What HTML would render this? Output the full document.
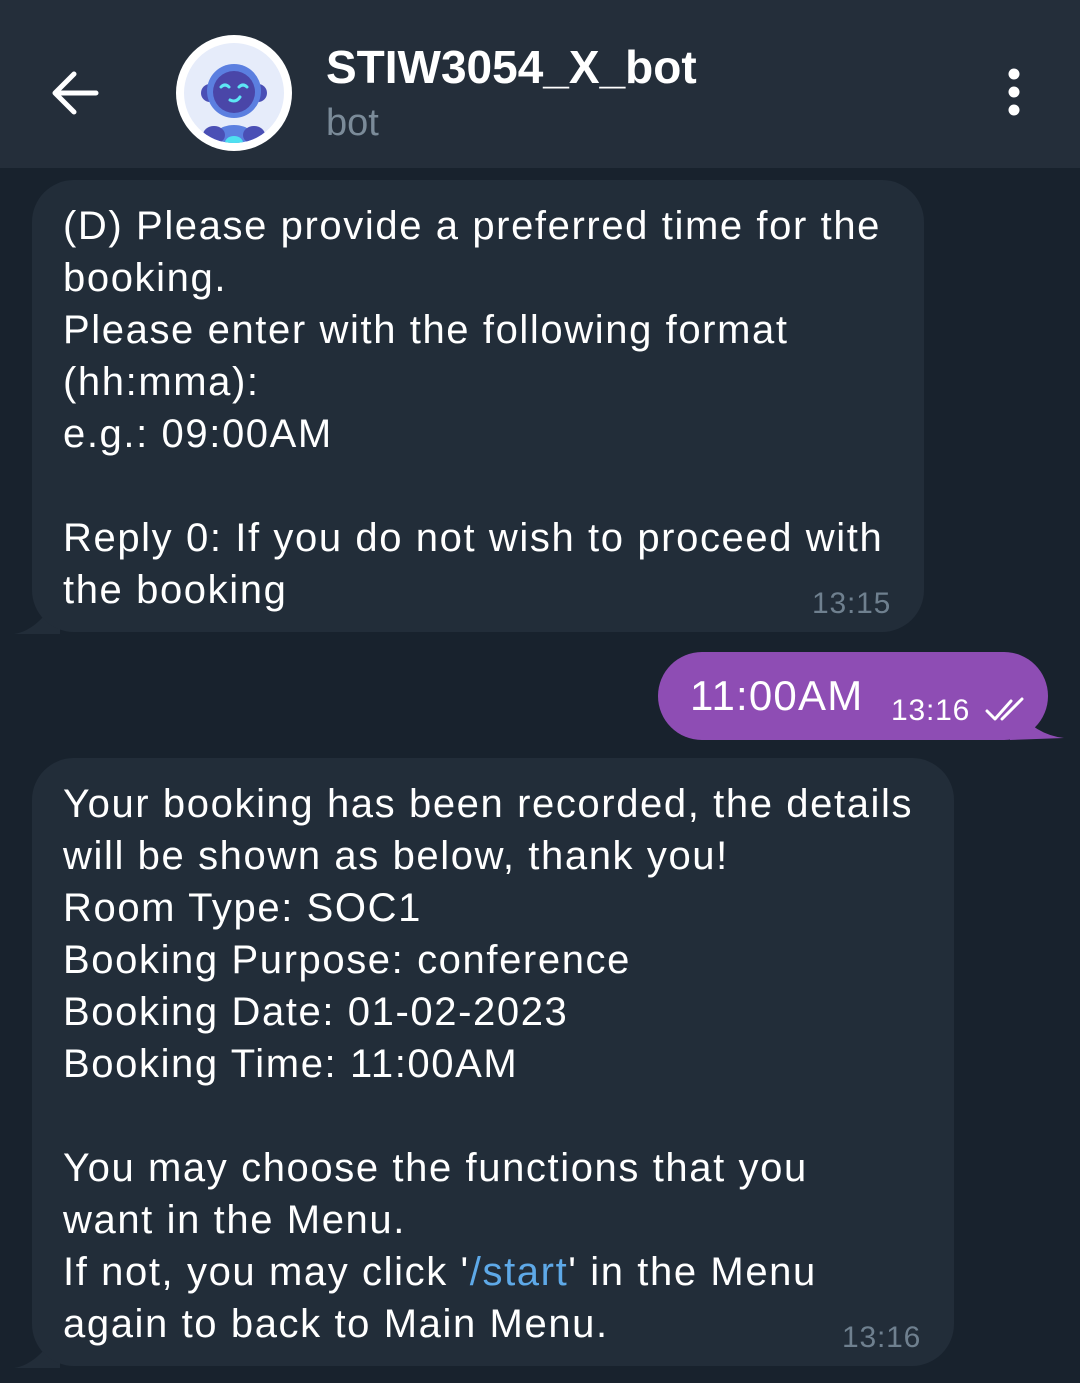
<!DOCTYPE html>
<html><head><meta charset="utf-8"><style>
*{margin:0;padding:0;box-sizing:border-box}
body{width:1080px;height:1383px;background:#18222d;font-family:"Liberation Sans",sans-serif;position:relative;overflow:hidden;color:#fff}
.hdr{position:absolute;left:0;top:0;width:1080px;height:168px;background:#242e3a}
.b{position:absolute;background:#222d39;border-radius:42px;font-size:40px;line-height:52px;padding:20px 0 0 31px;letter-spacing:1.6px;white-space:nowrap}
.t{position:absolute;font-size:30px;color:#6f808f;letter-spacing:0.8px}
a{color:#5ea9e8;text-decoration:none}
</style></head><body>
<div class="hdr">
<svg style="position:absolute;left:50px;top:70px" width="50" height="46" viewBox="0 0 50 46"><path d="M46 23H6M24 4L5 23l19 19" stroke="#fff" stroke-width="5" fill="none" stroke-linecap="round" stroke-linejoin="round"/></svg>
<svg style="position:absolute;left:176px;top:35px" width="116" height="116" viewBox="0 0 116 116">
<defs><clipPath id="c"><circle cx="58" cy="58" r="50"/></clipPath></defs>
<circle cx="58" cy="58" r="58" fill="#fff"/><circle cx="58" cy="58" r="50" fill="#e6ecfa"/>
<g clip-path="url(#c)">
<ellipse cx="58" cy="112" rx="26" ry="22" fill="#5b7fe0"/><ellipse cx="38" cy="100" rx="11" ry="9" fill="#4a4fb5"/><ellipse cx="78" cy="100" rx="11" ry="9" fill="#4a4fb5"/>
<ellipse cx="58" cy="108" rx="9" ry="7" fill="#4ee0f0"/></g>
<circle cx="34" cy="58" r="9" fill="#4a4fb5"/><circle cx="82" cy="58" r="9" fill="#4a4fb5"/>
<circle cx="58" cy="56" r="27" fill="#5b7fe0"/><circle cx="58" cy="57" r="21" fill="#4a46a8"/>
<path d="M45 52q4-4 8 0M63 52q4-4 8 0M54 65q6 3 10-3" stroke="#5de6f5" stroke-width="3" fill="none" stroke-linecap="round"/></svg>
<div style="position:absolute;left:326px;top:40px;font-size:46px;font-weight:bold">STIW3054_X_bot</div>
<div style="position:absolute;left:326px;top:102px;font-size:38px;color:#7b8b99">bot</div>
<svg style="position:absolute;left:1004px;top:68px" width="20" height="48"><circle cx="10" cy="6" r="5.5" fill="#fff"/><circle cx="10" cy="24" r="5.5" fill="#fff"/><circle cx="10" cy="42" r="5.5" fill="#fff"/></svg>
</div>
<svg style="position:absolute;left:0;top:0" width="1080" height="1383">
<path d="M60 592 Q40 630 14 634 L60 634Z" fill="#222d39"/>
<path d="M60 1326 Q40 1364 14 1368 L60 1368Z" fill="#222d39"/>
<path d="M1010 700 Q1030 734 1064 738 L1010 740Z" fill="#8e4db4"/>
</svg>
<div class="b" style="left:32px;top:180px;width:892px;height:452px">(D) Please provide a preferred time for the<br>booking.<br>Please enter with the following format<br>(hh:mma):<br>e.g.: 09:00AM<br><br>Reply 0: If you do not wish to proceed with<br>the booking</div>
<div class="t" style="left:812px;top:587px">13:15</div>
<div class="b" style="left:658px;top:652px;width:390px;height:88px;background:#8e4db4;padding:18px 0 0 32px;font-size:42px;border-radius:44px;letter-spacing:1.2px">11:00AM</div>
<div class="t" style="left:891px;top:694px;color:#fff">13:16</div>
<svg style="position:absolute;left:984px;top:697px" width="48" height="26"><path d="M3 14l8 8L27 4M18 22L38 2" stroke="#fff" stroke-width="3" fill="none" stroke-linecap="round" stroke-linejoin="round"/></svg>
<div class="b" style="left:32px;top:758px;width:922px;height:608px">Your booking has been recorded, the details<br>will be shown as below, thank you!<br>Room Type: SOC1<br>Booking Purpose: conference<br>Booking Date: 01-02-2023<br>Booking Time: 11:00AM<br><br>You may choose the functions that you<br>want in the Menu.<br>If not, you may click '<a>/start</a>' in the Menu<br>again to back to Main Menu.</div>
<div class="t" style="left:842px;top:1321px">13:16</div>
</body></html>
